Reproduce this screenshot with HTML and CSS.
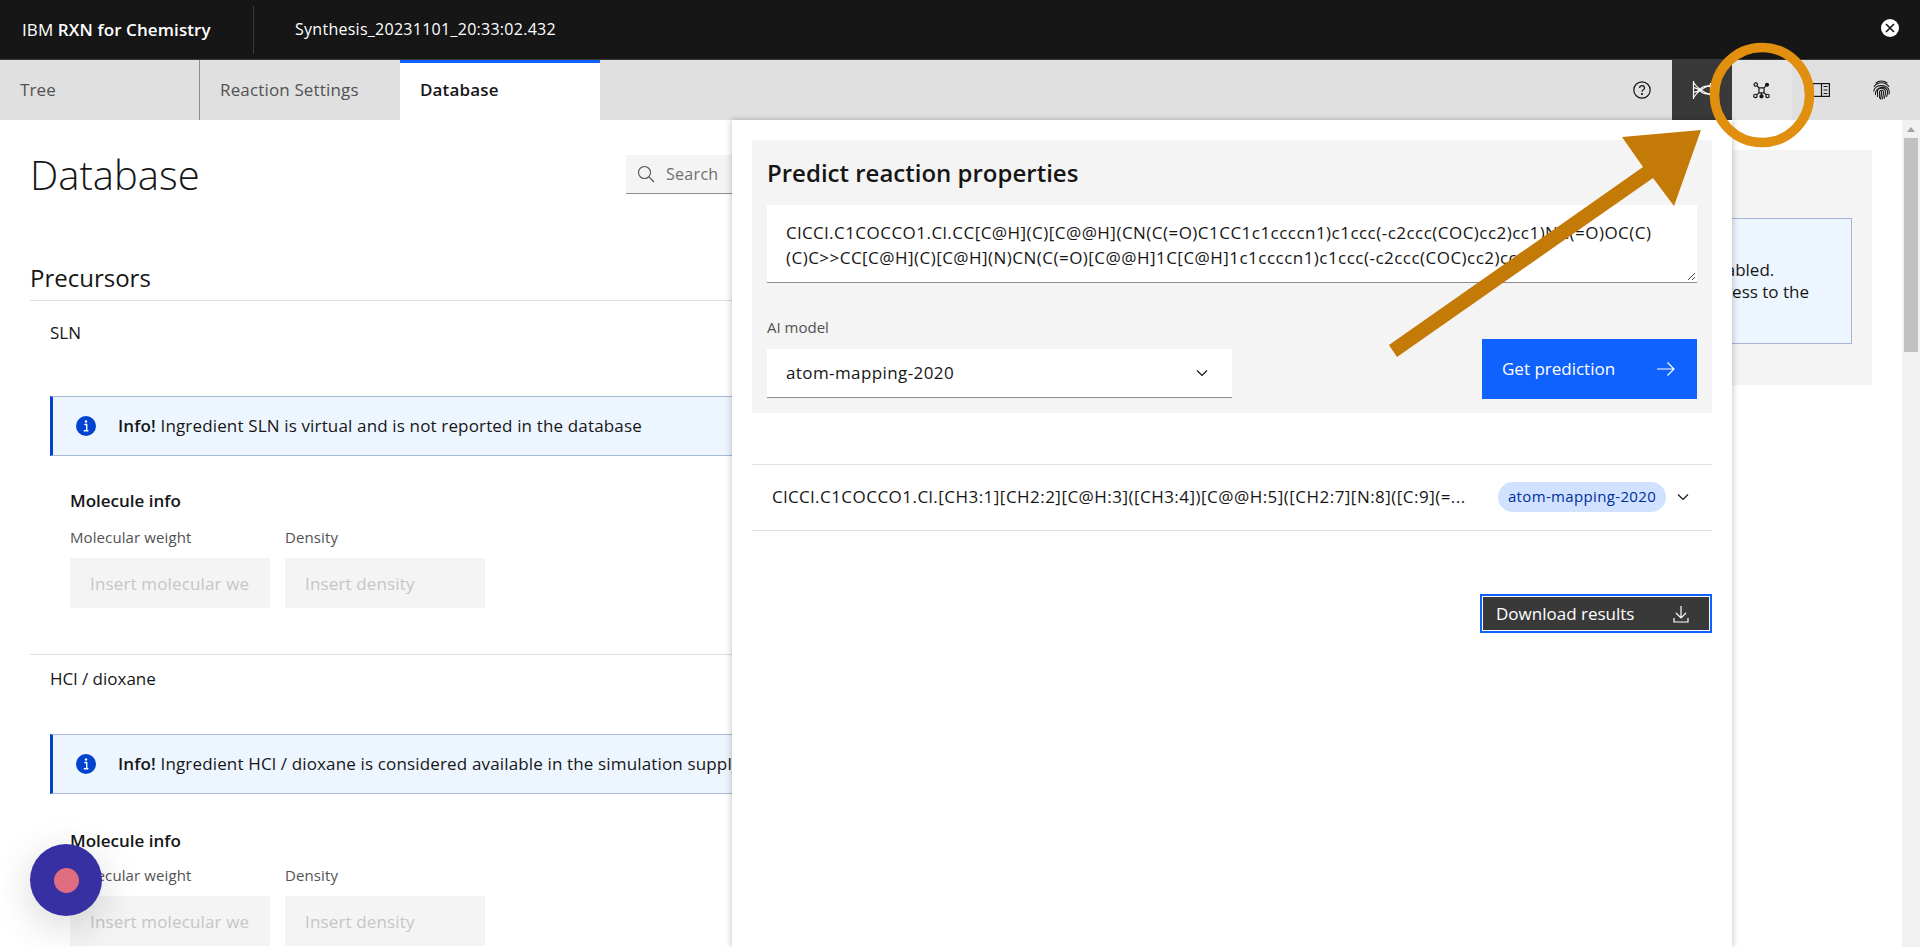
FILE: index.html
```html
<!DOCTYPE html>
<html lang="en">
<head>
<meta charset="utf-8">
<title>IBM RXN for Chemistry</title>
<link rel="stylesheet" href="styles.css">
</head>
<body>
<header class="topbar">
  <div class="brand">IBM <b>RXN for Chemistry</b></div>
  <div class="topbar-name">Synthesis_20231101_20:33:02.432</div>
  <button class="close" aria-label="Close"><svg width="18" height="18" viewBox="0 0 18 18"><circle cx="9" cy="9" r="9" fill="#fff"/><path d="M5 5l8 8M13 5l-8 8" stroke="#161616" stroke-width="1.6"/></svg></button>
</header>
<nav class="tabbar">
  <a class="tab tab-sep">Tree</a>
  <a class="tab">Reaction Settings</a>
  <a class="tab tab-active">Database</a>
  <div class="tools">
    <span class="tool"><svg width="20" height="20" viewBox="0 0 20 20" fill="none" stroke="#161616" stroke-width="1.2"><circle cx="10" cy="10" r="8.2"/><path d="M7.6 8c0-1.5 1.1-2.4 2.5-2.4S12.500 6.500 12.500 7.900c0 1.900-2.500 1.800-2.500 3.800"/><circle cx="10" cy="14" r=".5" fill="#161616"/></svg></span>
    <span class="tool tool-dark"><svg width="20" height="20" viewBox="0 0 20 20" fill="none" stroke="#fff" stroke-width="1.200"><path d="M1.500 1v18M18.500 3v14"/><path d="M1.500 2.500C5 8 9 11 18.500 15M1.500 17.500C5 12 9 8.500 18.500 5"/><path d="M1.500 8C6 6.500 8 11.500 11 13s5 1 7.500 .5M1.500 12C6 13.500 8 8.500 11 7s5-1 7.500-.5"/></svg></span>
    <span class="tool tool-light"><svg class="nudge" width="17" height="17" viewBox="0 0 20 20" fill="none" stroke="#161616" stroke-width="1.400"><circle cx="3.300" cy="3" r="2"/><circle cx="16.500" cy="3.200" r="1.700" fill="#161616"/><circle cx="2.800" cy="16.400" r="2"/><circle cx="10" cy="16.800" r="1.800" fill="#161616"/><circle cx="17" cy="16.400" r="2"/><path d="M7 6.800h6v6H7zM4.700 4.500L7 6.800M15.300 4.300L13 6.800M4.300 15l2.700-2.200M10 12.800v2.500M15.700 15L13 12.800"/></svg></span>
    <span class="tool"><svg class="nudge" width="18" height="14" viewBox="0 0 18 14" fill="none" stroke="#161616" stroke-width="1.200"><rect x=".6" y=".6" width="16.800" height="12.800"/><path d="M9.500.6v12.800"/><path d="M11.500 3.500h4M11.500 7h4M11.500 10.500h4"/></svg></span>
    <span class="tool"><svg class="nudge" width="17" height="20" viewBox="0 0 17 20" fill="none" stroke="#161616" stroke-width="1.100" stroke-linecap="round"><path d="M3 3C6 .4 11 .4 14 3"/><path d="M1.200 6.500C4.500 1.500 12.500 1.500 15.800 6.500"/><path d="M.8 11C1.500 3.800 15.500 3.800 16.200 11c.1 1.300 0 2.200-.2 3"/><path d="M2.500 14.500C1.800 6.500 14.300 5 14.500 11.500c0 2-.2 3.500-.8 5"/><path d="M4.500 16.500c.3-1 .1-3-.1-4.500-.5-5 8.100-5 8.100-.3 0 2.700-.4 4.800-1.200 6.600"/><path d="M6.500 18c.5-1.500.1-4 0-5.500-.3-3 4-3 4-.5 0 2.700-.4 4.800-1.300 7"/><path d="M8.500 11.500c0 2.700-.1 5-1 7.500"/></svg></span>
  </div>
</nav>

<main class="page">
  <section class="content">
    <div class="content-head">
      <h1 class="page-title">Database</h1>
      <div class="search"><svg width="18" height="18" viewBox="0 0 18 18" fill="none" stroke="#525252" stroke-width="1.100"><circle cx="7.500" cy="7.500" r="6"/><path d="M12 12l5 5"/></svg><span>Search</span></div>
    </div>
    <h2 class="section-title">Precursors</h2>
    <article class="ingredient">
      <div class="ingredient-name">SLN</div>
      <div class="alert"><svg class="alert-icon" width="20" height="20" viewBox="0 0 20 20"><circle cx="10" cy="10" r="10" fill="#0043ce"/><path d="M8.300 8.500h2.400v6M7.800 14.800h4.600" fill="none" stroke="#fff" stroke-width="1.400"/><circle cx="10" cy="5.500" r="1.200" fill="#fff"/></svg><p><b>Info!</b> Ingredient SLN is virtual and is not reported in the database</p></div>
      <h3 class="mol-title">Molecule info</h3>
      <div class="fields">
        <label class="field"><span>Molecular weight</span><div class="fake-input">Insert molecular we</div></label>
        <label class="field"><span>Density</span><div class="fake-input">Insert density</div></label>
      </div>
    </article>
    <article class="ingredient ingredient-next">
      <div class="ingredient-name">HCl / dioxane</div>
      <div class="alert"><svg class="alert-icon" width="20" height="20" viewBox="0 0 20 20"><circle cx="10" cy="10" r="10" fill="#0043ce"/><path d="M8.300 8.500h2.400v6M7.800 14.800h4.600" fill="none" stroke="#fff" stroke-width="1.400"/><circle cx="10" cy="5.500" r="1.200" fill="#fff"/></svg><p><b>Info!</b> Ingredient HCl / dioxane is considered available in the simulation supply</p></div>
      <h3 class="mol-title">Molecule info</h3>
      <div class="fields">
        <label class="field"><span>Molecular weight</span><div class="fake-input">Insert molecular we</div></label>
        <label class="field"><span>Density</span><div class="fake-input">Insert density</div></label>
      </div>
    </article>
  </section>
  <aside class="side">
    <div class="side-box">
      <div class="side-alert"><p>Some features of this database view were disabled.<br>Contact your site administrator to request access to the<br>full database.</p></div>
    </div>
  </aside>
  <div class="scrollbar"><i class="scroll-up"></i><i class="scroll-thumb"></i></div>
</main>

<div class="panel">
  <form class="predict">
    <h2 class="predict-title">Predict reaction properties</h2>
    <div class="smiles">ClCCl.C1COCCO1.Cl.CC[C@H](C)[C@@H](CN(C(=O)C1CC1c1ccccn1)c1ccc(-c2ccc(COC)cc2)cc1)NC(=O)OC(C)<br>(C)C&gt;&gt;CC[C@H](C)[C@H](N)CN(C(=O)[C@@H]1C[C@H]1c1ccccn1)c1ccc(-c2ccc(COC)cc2)cc1<svg class="grip" width="9" height="9" viewBox="0 0 9 9" stroke="#525252" fill="none"><path d="M1 8l7-7M5 8l3-3"/></svg></div>
    <div class="predict-row">
      <div class="model">
        <div class="model-label">AI model</div>
        <div class="select"><span class="select-value">atom-mapping-2020</span><svg width="14" height="14" viewBox="0 0 14 14" fill="none" stroke="#161616" stroke-width="1.200"><path d="M2 4.500l5 5 5-5"/></svg></div>
      </div>
      <button type="button" class="btn-primary"><span class="btn-label">Get prediction</span><svg width="20" height="16" viewBox="0 0 20 16" fill="none" stroke="#fff" stroke-width="1.200"><path d="M1 8h17M11.500 1.500L18 8l-6.500 6.500"/></svg></button>
    </div>
  </form>
  <div class="result">
    <div class="result-text">ClCCl.C1COCCO1.Cl.[CH3:1][CH2:2][C@H:3]([CH3:4])[C@@H:5]([CH2:7][N:8]([C:9](=...</div>
    <span class="tag">atom-mapping-2020</span>
    <svg width="14" height="14" viewBox="0 0 14 14" fill="none" stroke="#161616" stroke-width="1.200"><path d="M2 4.500l5 5 5-5"/></svg>
  </div>
  <div class="download-row">
    <button type="button" class="btn-dark">Download results<svg width="18" height="18" viewBox="0 0 18 18" fill="none" stroke="#fff" stroke-width="1.200"><path d="M9 1v12M4 8l5 5 5-5M2 13v4h14v-4"/></svg></button>
  </div>
</div>

<div class="fab"><i></i></div>

<svg class="annotation" width="1920" height="947" viewBox="0 0 1920 947">
  <polygon points="1701,130 1622,137 1643,167 1389,345 1397,357 1653,178 1674,206" fill="#c47a06"/>
  <circle cx="1762" cy="95" r="47.500" fill="none" stroke="#e08f0e" stroke-width="9.500"/>
</svg>
</body>
</html>
```
FILE: styles.css
```css
* { box-sizing: border-box; }
html, body { margin: 0; height: 947px; overflow: hidden; }
body { font-family: "Open Sans", "Liberation Sans", sans-serif; color: #161616; background: #fff; position: relative; font-size: 17px; }
p, h1, h2, h3 { margin: 0; font-weight: 400; }
button { font: inherit; border: 0; }

.topbar { height: 60px; background: #161616; color: #fff; display: flex; align-items: center; border-bottom: 1px solid #393939; }
.brand { width: 254px; padding-left: 22px; font-size: 17px; letter-spacing: .1px; border-right: 1px solid #393939; height: 48px; line-height: 48px; }
.brand b { font-weight: 600; }
.topbar-name { margin-left: 41px; font-size: 16px; letter-spacing: .27px; margin-top: -2px; }
.close { margin-left: auto; margin-right: 21px; background: none; padding: 0; height: 18px; width: 18px; margin-top: -4px; display: block; }

.tabbar { height: 60px; background: #e0e0e0; display: flex; }
.tab { width: 200px; padding: 0 20px; line-height: 60px; font-size: 17px; letter-spacing: .15px; color: #525252; }
.tab-sep { border-right: 1px solid #8d8d8d; }
.tab-active { background: #fff; color: #161616; font-weight: 600; border-top: 3px solid #0f62fe; line-height: 54px; }
.tools { margin-left: auto; display: flex; margin-right: 8px; }
.tool { width: 60px; height: 60px; display: flex; align-items: center; justify-content: center; }
.tool-dark { background: #393939; }
.tool-light { background: #e5e5e5; }
.nudge { margin-right: 2px; }

.page { position: relative; height: 827px; display: flex; overflow: hidden; }
.content { width: 732px; flex: none; padding: 0 0 0 30px; }
.content-head { display: flex; justify-content: space-between; align-items: flex-start; padding-top: 35px; height: 135px; }
.page-title { font-size: 40px; font-weight: 300; line-height: 44px; margin-top: -2px; }
.search { width: 106px; height: 39px; background: #f4f4f4; border-bottom: 1px solid #8d8d8d; display: flex; align-items: center; gap: 11px; padding-left: 11px; color: #6f6f6f; overflow: hidden; flex: none; font-size: 16px; letter-spacing: .3px; }
.section-title { font-size: 24px; line-height: 45px; height: 46px; border-bottom: 1px solid #e0e0e0; font-weight: 400; }
.ingredient { padding-bottom: 46px; border-bottom: 1px solid #e0e0e0; }
.ingredient-next { border-bottom: 0; padding-bottom: 0; }
.ingredient-name { padding: 21px 0 0 20px; line-height: 22px; height: 95px; }
.ingredient-next .ingredient-name { padding-top: 13px; height: 79px; }
.alert { margin-left: 20px; height: 60px; background: #edf5ff; border: 1px solid #a6bbd9; border-right: 0; border-left: 3px solid #0043ce; display: flex; align-items: center; overflow: hidden; white-space: nowrap; }
.alert-icon { margin-left: 23px; flex: none; }
.alert p { margin-left: 22px; font-size: 17px; letter-spacing: .15px; padding-bottom: 1px; }
.alert b { font-weight: 600; }
.mol-title { margin: 34px 0 0 40px; font-size: 17px; font-weight: 600; line-height: 22px; }
.ingredient-next .mol-title { margin-top: 36px; }
.fields { display: flex; gap: 15px; margin: 15px 0 0 40px; }
.ingredient-next .fields { margin-top: 13px; }
.field { width: 200px; display: block; }
.field span { font-size: 15px; letter-spacing: .1px; line-height: 20px; display: block; color: #525252; height: 31px; }
.fake-input { height: 50px; background: #f4f4f4; color: #c6c6c6; line-height: 51px; padding-left: 20px; white-space: nowrap; overflow: hidden; letter-spacing: .15px; }

.side { flex: 1; display: block; overflow: hidden; }
.side-box { margin: 30px 30px 0 0; height: 235px; background: #f4f4f4; padding: 68px 20px 0 0; }
.side-alert { height: 126px; background: #edf5ff; border: 1px solid #a6b3d4; padding: 40px 0 0 636px; font-size: 17px; line-height: 22px; white-space: nowrap; overflow: hidden; }
.scrollbar { width: 18px; flex: none; background: #f1f1f1; position: relative; display: flex; flex-direction: column; align-items: center; padding-top: 7px; }
.scroll-up { width: 0; height: 0; border: 4.500px solid transparent; border-top: 0; border-bottom: 5px solid #a3a3a3; }
.scroll-thumb { width: 14px; height: 214px; background: #c1c1c1; margin-top: 6px; }

.panel { position: absolute; left: 732px; top: 120px; width: 1000px; height: 827px; background: #fff; box-shadow: -2px 0 6px rgba(0,0,0,.14), 2px 0 6px rgba(0,0,0,.14); padding: 20px; }
.predict { background: #f4f4f4; height: 273px; padding: 15px; }
.predict-title { font-size: 24px; font-weight: 600; line-height: 36px; height: 50px; }
.smiles { position: relative; height: 78px; background: #fff; border-bottom: 1px solid #8d8d8d; padding: 15px 19px 0; line-height: 25px; letter-spacing: .47px; white-space: nowrap; overflow: hidden; }
.grip { position: absolute; right: 1px; bottom: 1px; }
.predict-row { display: flex; justify-content: space-between; align-items: flex-end; margin-top: 35px; }
.model-label { font-size: 15px; line-height: 18px; color: #525252; margin-bottom: 13px; }
.select { width: 465px; height: 49px; margin-bottom: 1px; background: #fff; border-bottom: 1px solid #8d8d8d; display: flex; align-items: center; justify-content: space-between; padding: 0 23px 0 19px; letter-spacing: .4px; }
.select-value { margin-top: -1px; }
.btn-primary { width: 215px; height: 60px; background: #0f62fe; color: #fff; display: flex; align-items: center; justify-content: space-between; padding: 0 21px 0 20px; }
.btn-label { margin-top: -2px; }
.result { margin-top: 51px; height: 67px; border-top: 1px solid #e0e0e0; border-bottom: 1px solid #e0e0e0; display: flex; align-items: center; padding: 0 15px 2px 20px; }
.result-text { width: 696px; flex: none; white-space: nowrap; letter-spacing: .47px; }
.tag { margin-left: 30px; width: 168px; height: 30px; border-radius: 15px; background: #d0e2ff; color: #002d9c; font-size: 15px; letter-spacing: .35px; line-height: 29px; text-align: center; flex: none; }
.result svg { margin-left: 10px; }
.download-row { display: flex; justify-content: flex-end; margin-top: 63px; }
.btn-dark { width: 232px; height: 39px; background: #393939; color: #fff; display: flex; align-items: center; justify-content: space-between; padding: 0 22px 0 16px; box-shadow: inset 0 0 0 2px #0f62fe, inset 0 0 0 3px #fff; }

.fab { position: absolute; left: 30px; top: 844px; width: 72px; height: 72px; border-radius: 50%; background: #3730a3; box-shadow: 0 10px 40px rgba(0,0,0,.16); display: flex; align-items: center; justify-content: center; }
.fab i { width: 25px; height: 25px; border-radius: 50%; background: #e06c80; }
.annotation { position: absolute; left: 0; top: 0; pointer-events: none; }
```
